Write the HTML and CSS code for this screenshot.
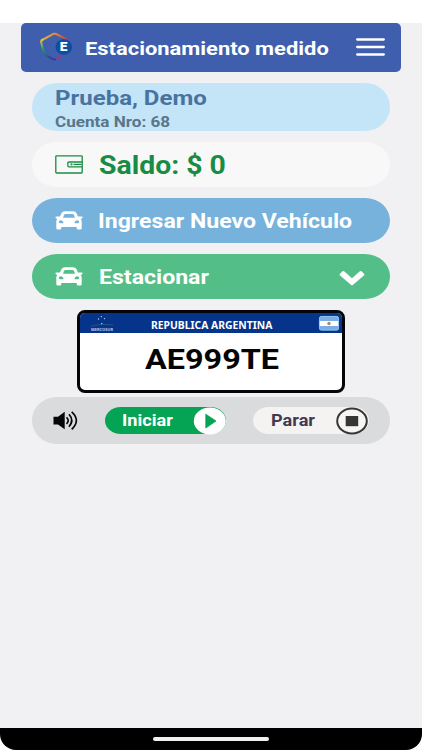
FILE: index.html
```html
<!DOCTYPE html>
<html lang="es">
<head>
<meta charset="utf-8">
<title>Estacionamiento medido</title>
<link rel="stylesheet" href="styles.css">
</head>
<body>
<div class="screen">
  <div class="status-space"></div>
  <main class="app">
    <header class="topbar">
      <svg class="logo" viewBox="0 0 34 30" fill="none">
        <defs>
          <linearGradient id="rim" x1="2" y1="4" x2="25" y2="26" gradientUnits="userSpaceOnUse">
            <stop offset="0" stop-color="#e8c43a"/><stop offset=".35" stop-color="#e07a36"/><stop offset=".65" stop-color="#c23a55"/><stop offset="1" stop-color="#6b3fa5"/>
          </linearGradient>
          <linearGradient id="side" x1="2" y1="8" x2="17" y2="28" gradientUnits="userSpaceOnUse">
            <stop offset="0" stop-color="#e8c43a"/><stop offset=".35" stop-color="#239c66"/><stop offset=".75" stop-color="#254a91"/><stop offset="1" stop-color="#3c369c"/>
          </linearGradient>
        </defs>
        <path d="M2.300 8.500 14.500 1.800Q15.500 1.400 17 2L26.500 6.500Q28 7.500 27.300 10Q25.500 19.500 22.500 24L16.500 27.300" stroke="url(#rim)" stroke-width="2"/>
        <path d="M4 7.500Q1.800 8.600 2.200 10.200Q4 20.500 8 23.800L14 27.200Q15.500 27.900 17 27" stroke="url(#side)" stroke-width="2"/>
        <ellipse cx="24.800" cy="15" rx="8.300" ry="7.700" fill="#0c4f9d"/>
        <text class="logo-letter" x="20.700" y="19.300" textLength="7.700" lengthAdjust="spacingAndGlyphs">E</text>
      </svg>
      <h1 class="wide title">Estacionamiento medido</h1>
      <svg class="menu" viewBox="0 0 29 20"><path d="M1.200 2.500H27.800M1.200 10H27.800M1.200 17.500H27.800" stroke="#fff" stroke-width="2.300" stroke-linecap="round"/></svg>
    </header>

    <section class="pill user">
      <span class="wide name">Prueba, Demo</span>
      <span class="wide account">Cuenta Nro: 68</span>
    </section>

    <section class="pill balance">
      <svg class="icon wallet" viewBox="0 0 28 19" fill="none" stroke="#188c45" stroke-width="1.300">
        <rect x=".8" y=".8" width="26.400" height="17.200" rx=".8"/>
        <path d="M27 7H14Q12.800 7 12.800 8.200V10.600Q12.800 11.800 14 11.800H27"/><path d="M18.500 9.400H26.500"/><circle cx="16.500" cy="9.400" r=".4"/>
      </svg>
      <span class="wide amount">Saldo: $ 0</span>
    </section>

    <section class="pill vehicle">
      <svg class="icon car" viewBox="0 0 28 19"><path fill="#fff" fill-rule="evenodd" d="M5 5.500 6.300 2.500Q7.300.3 10 .3H18Q20.700.3 21.700 2.500L23 5.500H26.500Q27.900 5.500 27.500 6.400L27.200 7.300Q27 7.700 26.300 7.700H25.500Q26.700 8.800 26.700 10.300V17.200Q26.700 18.500 25.200 18.500H23.200Q21.700 18.500 21.700 17.200V15.900H6.300V17.200Q6.300 18.500 4.800 18.500H2.900Q1.300 18.500 1.300 17.200V10.300Q1.300 8.800 2.500 7.700H1.700Q1 7.700.8 7.300L.5 6.400Q.1 5.500 1.500 5.500ZM8 6.800H20L19 4.100Q18.600 3 17.500 3H10.500Q9.400 3 9 4.100ZM5.700 9.200Q3.800 9.200 3.800 10.800 3.800 12.300 5.700 12.300H7.600Q8.700 12.300 8.600 11.500 7.600 9.200 5.700 9.200ZM22.300 9.200Q20.400 9.200 19.400 11.500 19.300 12.300 20.400 12.300H22.300Q24.200 12.300 24.200 10.800 24.200 9.200 22.300 9.200Z"/></svg>
      <span class="wide action">Ingresar Nuevo Vehículo</span>
    </section>

    <section class="pill park">
      <svg class="icon car" viewBox="0 0 28 19"><path fill="#fff" fill-rule="evenodd" d="M5 5.500 6.300 2.500Q7.300.3 10 .3H18Q20.700.3 21.700 2.500L23 5.500H26.500Q27.900 5.500 27.500 6.400L27.200 7.300Q27 7.700 26.300 7.700H25.500Q26.700 8.800 26.700 10.300V17.200Q26.700 18.500 25.200 18.500H23.200Q21.700 18.500 21.700 17.200V15.900H6.300V17.200Q6.300 18.500 4.800 18.500H2.900Q1.300 18.500 1.300 17.200V10.300Q1.300 8.800 2.500 7.700H1.700Q1 7.700.8 7.300L.5 6.400Q.1 5.500 1.500 5.500ZM8 6.800H20L19 4.100Q18.600 3 17.500 3H10.500Q9.400 3 9 4.100ZM5.700 9.200Q3.800 9.200 3.800 10.800 3.800 12.300 5.700 12.300H7.600Q8.700 12.300 8.600 11.500 7.600 9.200 5.700 9.200ZM22.300 9.200Q20.400 9.200 19.400 11.500 19.300 12.300 20.400 12.300H22.300Q24.200 12.300 24.200 10.800 24.200 9.200 22.300 9.200Z"/></svg>
      <span class="wide action park-label">Estacionar</span>
      <svg class="chevron" viewBox="0 0 26 16"><path fill="#fff" d="M.8 4 3.500 1.200Q4.300.6 5.100 1.200L13 8.200 20.900 1.200Q21.700.6 22.500 1.200L25.200 4Q25.800 4.700 25.200 5.300L13.800 15Q13 15.500 12.200 15L.8 5.300Q.2 4.700.8 4Z"/></svg>
    </section>

    <section class="plate">
      <div class="plate-head">
        <svg class="mercosur" viewBox="0 0 24 18">
          <g fill="#c8d9f5"><circle cx="8.500" cy="4" r=".7"/><circle cx="11.300" cy="1.600" r=".7"/><circle cx="14.500" cy="3.600" r=".7"/><circle cx="11.800" cy="8.700" r=".8"/></g>
          <path d="M1 11.200Q10 8.300 23 10" fill="none" stroke="#2d6585" stroke-width=".7"/>
          <text class="mercosur-text" x="1" y="16.300" textLength="22" lengthAdjust="spacingAndGlyphs">MERCOSUR</text>
        </svg>
        <span class="wide country">REPUBLICA ARGENTINA</span>
        <svg class="flag" viewBox="0 0 20 15"><rect width="20" height="14.500" rx="2.500" fill="#78aee3"/><path d="M.5 5H19.500V10H.5Z" fill="#fff"/><circle cx="10" cy="7.500" r="1.700" fill="#b18b5e"/><rect x=".4" y=".4" width="19.200" height="13.700" rx="2.300" fill="none" stroke="#9cc5ec" stroke-width=".7"/></svg>
      </div>
      <div class="plate-body"><span class="wide number">AE999TE</span></div>
    </section>

    <section class="pill controls">
      <svg class="speaker" viewBox="0 0 26 20"><path fill="#050505" d="M.5 5.800H5L11.700.8V18.300L5 13.400H.5Z"/><path fill="none" stroke="#050505" stroke-width="1.700" d="M13.500 6.300Q17 9.500 13.500 12.800M16 3.300Q21.500 9.500 16 15.800M18.700.8Q28 9.500 18.700 18.300"/></svg>
      <div class="button start">
        <span class="wide start-label">Iniciar</span>
        <svg class="play" viewBox="0 0 33 28"><ellipse cx="16.800" cy="14" rx="16" ry="13.500" fill="#fff"/><path d="M12.800 7.200 23 14 12.800 21Z" fill="#05a454" stroke="#05a454" stroke-width=".8" stroke-linejoin="round"/></svg>
      </div>
      <div class="button stop">
        <span class="wide stop-label">Parar</span>
        <svg class="stop-icon" viewBox="0 0 32 28"><ellipse cx="16" cy="14" rx="14.800" ry="12.500" fill="#f6f5f4" stroke="#363636" stroke-width="2"/><rect x="9.700" y="9" width="12.500" height="10.200" fill="#363636"/></svg>
      </div>
    </section>
  </main>
  <footer class="navbar"><div class="home"></div></footer>
</div>
</body>
</html>
```

FILE: styles.css
```css
* { box-sizing: border-box; }
body { margin: 0; background: #fff; font-family: Roboto, "Liberation Sans", sans-serif; font-weight: 700; }
svg { display: block; flex: none; overflow: visible; }
.screen { width: 422px; height: 750px; display: flex; flex-direction: column; overflow: hidden; }
.status-space { height: 22.5px; flex: none; }
.app { flex: 1; background: #f1f1f4; display: flex; flex-direction: column; align-items: flex-start; }
.wide { display: block; flex: none; white-space: nowrap; transform-origin: 0 50%; line-height: 1; }

.topbar { width: 379.500px; height: 49px; margin-left: 21.300px; padding: 0 15.500px 0 17.500px; border-radius: 5px; background: #3f5fae; display: flex; align-items: center; }
.logo { width: 34px; height: 30px; }
.logo-letter { font: 900 12px Roboto, sans-serif; fill: #fff; }
.title { margin: 2px 0 0 12px; font-size: 19px; width: 259.500px; color: #fff; transform: scaleX(1.153); }
.menu { width: 29px; height: 20px; margin-left: 12px; }

.pill { width: 358px; margin-left: 32px; border-radius: 25px / 50%; display: flex; align-items: center; }
.user { height: 48px; margin-top: 11.500px; padding: 5px 0 0 23px; background: #c4e4f8; flex-direction: column; align-items: flex-start; }
.name { font-size: 20.700px; color: #48739f; transform: scaleX(1.16); }
.account { margin-top: 6px; font-size: 14.200px; color: #587689; transform: scaleX(1.205); }

.balance { height: 44.500px; margin-top: 11px; padding-left: 22.500px; background: #f8f8f8; }
.icon { width: 28px; height: 19px; }
.amount { margin: 3px 0 0 16.300px; font-size: 25px; color: #188c45; transform: scaleX(1.135); }

.vehicle { height: 45.500px; margin-top: 11px; padding-left: 22.500px; background: #76b2dc; }
.action { margin: 2px 0 0 15px; font-size: 19.300px; color: #fff; transform: scaleX(1.197); }
.park { height: 44.500px; margin-top: 11.300px; padding: 0 25px 0 22.500px; background: #54be88; }
.park-label { margin-left: 16.600px; }
.chevron { width: 26px; height: 16px; margin: 2px 0 0 auto; }

.plate { width: 268px; height: 83.500px; margin: 11px 0 0 77px; border: 3.500px solid #030508; border-radius: 8px; background: #fff; overflow: hidden; }
.plate-head { height: 20px; padding: 0 4px 0 10px; background: #05348a; display: flex; align-items: flex-start; }
.mercosur { width: 24px; height: 18px; margin-top: 2px; }
.mercosur-text { font: 700 4px "Open Sans", sans-serif; fill: #b9caec; }
.country { margin: 6px 0 0 36.700px; width: 132px; font-family: "Noto Sans", sans-serif; font-size: 11.300px; line-height: 11.300px; color: #fff; transform: scaleX(.917); }
.flag { width: 20px; height: 15px; margin: 3px -1px 0 auto; }
.plate-body { padding: 13.500px 0 0 64.500px; }
.number { font-size: 27.500px; color: #050505; transform: scaleX(1.178); }

.controls { height: 46.500px; margin-top: 4px; padding-left: 21px; background: #d9dbdd; }
.speaker { width: 26px; height: 20px; }
.button { height: 27.500px; border-radius: 16px / 50%; display: flex; align-items: center; justify-content: space-between; }
.start { width: 121px; margin-left: 25.500px; padding-left: 17px; background: #05a454; }
.start-label { font-size: 16.200px; color: #fff; transform: scaleX(1.12); margin-top: 2px; }
.play { width: 33px; height: 28px; }
.stop { width: 116px; margin-left: 27.500px; padding-left: 18px; background: #f4f3f2; }
.stop-label { font-size: 16.200px; color: #44394d; transform: scaleX(1.12); margin-top: 2px; }
.stop-icon { width: 32px; height: 28px; margin-right: 1px; }

.navbar { height: 22.500px; flex: none; border-radius: 0 0 16px 16px; background: #000; display: flex; justify-content: center; padding-top: 9px; }
.home { width: 116px; height: 4px; border-radius: 2px; background: #f0f1f0; }
```
